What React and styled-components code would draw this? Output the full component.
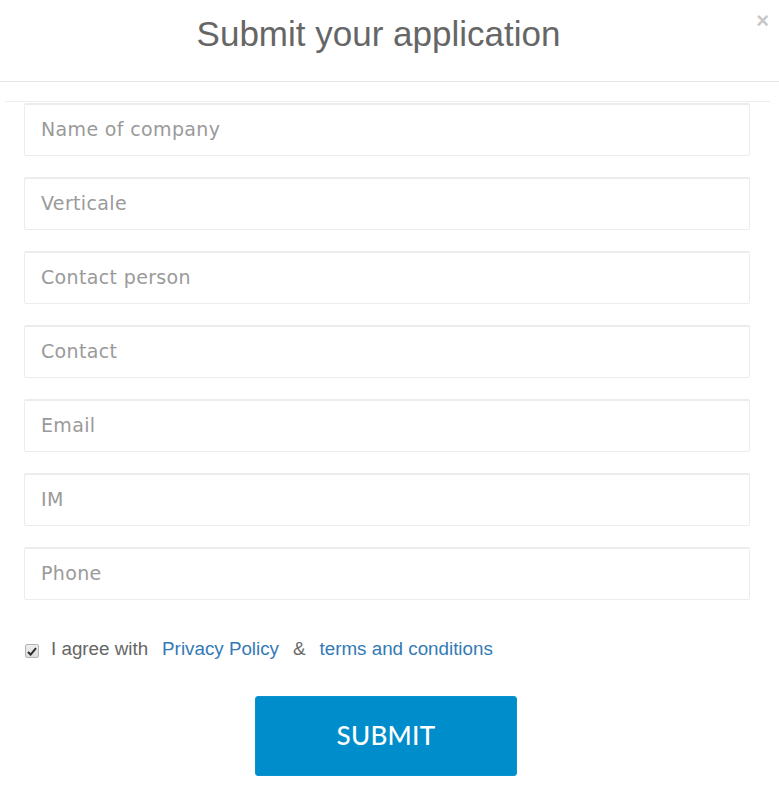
import React from "react";
import styled, { createGlobalStyle } from "styled-components";

const Global = createGlobalStyle`
  html, body { margin: 0; padding: 0; background: #fff; }
  body { font-family: "Liberation Sans", Arial, sans-serif; }
  * { box-sizing: border-box; }
`;

const Modal = styled.div`
  width: 779px;
  min-height: 802px;
  background: #fff;
  position: relative;
`;

const Header = styled.div`
  height: 82px;
  border-bottom: 1px solid #e5e5e5;
  display: flex;
  align-items: flex-start;
  justify-content: center;
  padding-top: 14px;
`;

const Title = styled.h2`
  margin: 0;
  font-family: "Liberation Sans", Arial, sans-serif;
  font-weight: 400;
  font-size: 35px;
  line-height: 40px;
  color: #666;
  margin-left: -22px;
`;

const Close = styled.button`
  position: absolute;
  top: 9px;
  right: 10px;
  border: 0;
  background: none;
  padding: 0;
  font-family: "Liberation Sans", Arial, sans-serif;
  font-size: 22px;
  font-weight: 700;
  color: #c8c8c8;
  line-height: 24px;
  cursor: pointer;
`;

const Body = styled.form`
  margin: 19px 9px 0 5px;
  border-top: 1px solid #eee;
  padding: 1px 20px 0 19px;
  display: flex;
  flex-direction: column;
`;

const Fields = styled.div`
  display: flex;
  flex-direction: column;
  gap: 21px;
`;

const Input = styled.input`
  display: block;
  width: 726px;
  height: 53px;
  border: 1px solid #ececec;
  border-top: 2px solid #ececec;
  border-radius: 2px;
  padding: 0 16px 3px;
  font-family: "DejaVu Sans", sans-serif;
  font-size: 19px;
  color: #555;
  outline: none;
  &::placeholder {
    color: #9a9a9a;
    letter-spacing: 0.35px;
  }
`;

const Agree = styled.label`
  display: flex;
  align-items: center;
  margin-top: 38px;
  margin-left: 1px;
  font-family: "Liberation Sans", Arial, sans-serif;
  font-size: 18.8px;
  color: #666;
  line-height: 22px;
`;

const CheckBox = styled.span`
  display: inline-flex;
  align-items: center;
  justify-content: center;
  width: 14px;
  height: 14px;
  margin: 4px 12px 0 0;
  border: 1px solid #b5b5b5;
  border-radius: 2px;
  background: linear-gradient(#eeeeee, #dcdcdc);
`;

const Link = styled.a`
  color: #337ab7;
  text-decoration: none;
  margin: 0 14px;
`;

const Submit = styled.button`
  align-self: flex-start;
  margin: 36px 0 0 231px;
  width: 262px;
  height: 80px;
  border: 1px solid #0a93d0;
  border-radius: 3px;
  background: #008dcb;
  color: #fff;
  font-family: Lato, sans-serif;
  font-size: 26px;
  font-weight: 500;
  letter-spacing: 0.3px;
  padding-bottom: 4px;
  cursor: pointer;
`;

const fields = [
  "Name of company",
  "Verticale",
  "Contact person",
  "Contact",
  "Email",
  "IM",
  "Phone",
];

export default function App() {
  return (
    <>
      <Global />
      <Modal>
        <Header>
          <Title>Submit your application</Title>
        </Header>
        <Close type="button">×</Close>
        <Body onSubmit={(e) => e.preventDefault()}>
          <Fields>
            {fields.map((f) => (
              <Input key={f} placeholder={f} />
            ))}
          </Fields>
          <Agree>
            <CheckBox role="checkbox" aria-checked="true">
              <svg width="10" height="9" viewBox="0 0 10 9">
                <path d="M1 5 L3.6 7.6 L9 1.2" fill="none" stroke="#2b2b2b" strokeWidth="2" />
              </svg>
            </CheckBox>
            I agree with
            <Link href="#">Privacy Policy</Link>&amp;
            <Link href="#">terms and conditions</Link>
          </Agree>
          <Submit type="submit">SUBMIT</Submit>
        </Body>
      </Modal>
    </>
  );
}
